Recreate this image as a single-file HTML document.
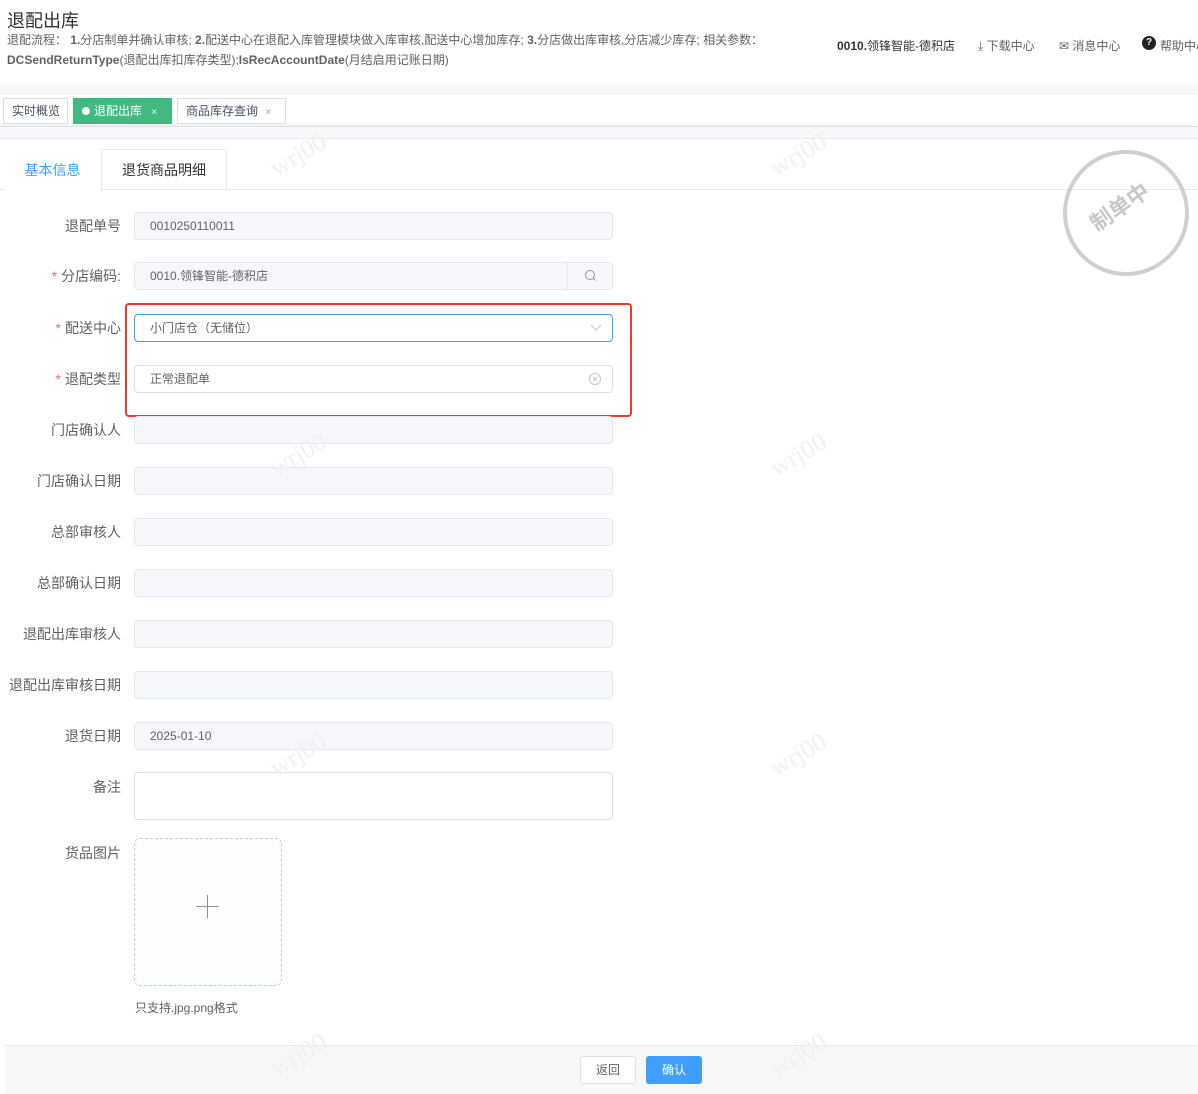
<!DOCTYPE html>
<html><head><meta charset="utf-8"><style>
*{box-sizing:border-box;margin:0;padding:0}
body{width:1198px;height:1094px;position:relative;background:#fff;font-family:"Liberation Sans","Noto Sans CJK SC",sans-serif;color:#606266;overflow:hidden}
.a{position:absolute}
.lbl{position:absolute;right:1077px;font-size:14px;color:#606266;white-space:nowrap;line-height:28px}
.req{color:#f56c6c;margin-right:4px}
.inp{position:absolute;left:134px;width:479px;height:28px;background:#f5f7fa;border:1px solid #e4e7ed;border-radius:4px;font-size:12px;color:#606266;line-height:26px;padding-left:15px}
.wm{position:absolute;font-family:"Liberation Serif",serif;font-size:26px;color:#f0f0f0;transform:rotate(-30deg);white-space:nowrap}
.tab{position:absolute;top:98px;height:26px;border:1px solid #d8dce5;font-size:12px;line-height:24px;padding:0 8px;color:#495060;background:#fff;white-space:nowrap}
</style></head><body>
<div class="a" style="left:7px;top:7px;font-size:18px;color:#303133">退配出库</div>
<div class="a" style="left:7px;top:30px;font-size:12px;color:#606266;line-height:20px;width:800px;white-space:nowrap">退配流程： <b>1.</b>分店制单并确认审核; <b>2.</b>配送中心在退配入库管理模块做入库审核,配送中心增加库存; <b>3.</b>分店做出库审核,分店减少库存; 相关参数：<br><b>DCSendReturnType</b>(退配出库扣库存类型);<b>IsRecAccountDate</b>(月结启用记账日期)</div>
<div class="a" style="left:837px;top:37px;font-size:12px;color:#303133;font-weight:bold">0010.<span style="font-weight:normal">领锋智能-德积店</span></div>
<div class="a" style="left:978px;top:37px;font-size:12px;color:#606266">⤓ 下载中心</div>
<div class="a" style="left:1059px;top:37px;font-size:12px;color:#606266">✉ 消息中心</div>
<div class="a" style="left:1142px;top:36px;width:14px;height:14px;border-radius:50%;background:#222;color:#fff;font-size:10px;text-align:center;line-height:14px;font-weight:bold">?</div>
<div class="a" style="left:1160px;top:37px;font-size:12px;color:#606266;white-space:nowrap">帮助中心</div>
<div class="a" style="left:0;top:84px;width:1198px;height:10px;background:#f7f8fa;border-bottom:1px solid #eef0f3"></div>
<div class="a" style="left:0;top:126px;width:1198px;height:12px;background:#f7f8fa;border-top:1px solid #dcdfe6;box-shadow:0 -1px 3px rgba(0,0,0,.08)"></div>
<div class="a" style="left:0;top:138px;width:1198px;height:1px;background:#e8eaee"></div>
<div class="tab" style="left:3px;width:65px">实时概览</div>
<div class="tab" style="left:73px;width:99px;background:#42b983;border-color:#42b983;color:#fff"><span style="display:inline-block;width:8px;height:8px;border-radius:50%;background:#fff;margin-right:4px"></span>退配出库 <span style="font-size:10px;margin-left:6px">×</span></div>
<div class="tab" style="left:177px;width:109px">商品库存查询 <span style="font-size:10px;margin-left:4px;color:#999">×</span></div>
<div class="a" style="left:0;top:189px;width:1198px;height:1px;background:#e4e7ed"></div>
<div class="a" style="left:4px;top:149px;width:223px;height:41px;border:1px solid #e4e7ed;border-bottom:none;border-radius:4px 4px 0 0"></div>
<div class="a" style="left:4px;top:149px;width:98px;height:42px;background:#fff;border-right:1px solid #e4e7ed;font-size:14px;color:#409eff;text-align:center;line-height:42px">基本信息</div>
<div class="a" style="left:102px;top:149px;width:124px;height:40px;font-size:14px;color:#303133;text-align:center;line-height:42px">退货商品明细</div>

<div class="lbl" style="top:212px">退配单号</div><div class="inp" style="top:212px">0010250110011</div>
<div class="lbl" style="top:262px"><span class="req">*</span>分店编码:</div><div class="inp" style="top:262px">0010.领锋智能-德积店</div>
<div class="a" style="left:567px;top:263px;width:45px;height:26px;border-left:1px solid #e4e7ed"><svg width="45" height="26"><circle cx="22" cy="12" r="4.5" fill="none" stroke="#909399" stroke-width="1"/><line x1="25.5" y1="15.5" x2="27.5" y2="17.5" stroke="#909399"/></svg></div>
<div class="lbl" style="top:314px"><span class="req">*</span>配送中心</div><div class="inp" style="top:314px;background:#fff;border-color:#409eff">小门店仓（无储位）<svg style="position:absolute;right:10px;top:9px" width="12" height="8"><path d="M1 1 L6 6 L11 1" fill="none" stroke="#c0c4cc" stroke-width="1"/></svg></div>
<div class="lbl" style="top:365px"><span class="req">*</span>退配类型</div><div class="inp" style="top:365px;background:#fff;border-color:#dcdfe6">正常退配单<svg style="position:absolute;right:10px;top:6px" width="14" height="14"><circle cx="7" cy="7" r="5.5" fill="none" stroke="#c0c4cc"/><path d="M5 5 L9 9 M9 5 L5 9" stroke="#c0c4cc"/></svg></div>
<div class="a" style="left:125px;top:303px;width:507px;height:114px;border:2px solid #f03a2e;border-radius:4px"></div>
<div class="lbl" style="top:416px">门店确认人</div><div class="inp" style="top:416px"></div>
<div class="lbl" style="top:467px">门店确认日期</div><div class="inp" style="top:467px"></div>
<div class="lbl" style="top:518px">总部审核人</div><div class="inp" style="top:518px"></div>
<div class="lbl" style="top:569px">总部确认日期</div><div class="inp" style="top:569px"></div>
<div class="lbl" style="top:620px">退配出库审核人</div><div class="inp" style="top:620px"></div>
<div class="lbl" style="top:671px">退配出库审核日期</div><div class="inp" style="top:671px"></div>
<div class="lbl" style="top:722px">退货日期</div><div class="inp" style="top:722px">2025-01-10</div>
<div class="lbl" style="top:773px">备注</div><div class="inp" style="top:772px;height:48px;background:#fff;border-color:#dcdfe6"></div>
<div class="lbl" style="top:839px">货品图片</div>
<div class="a" style="left:134px;top:838px;width:148px;height:148px;border:1px dashed #c0ccda;border-radius:6px;background:#fbfdff"></div>
<div class="a" style="left:196px;top:906px;width:23px;height:1px;background:#8c939d"></div>
<div class="a" style="left:207px;top:895px;width:1px;height:23px;background:#8c939d"></div>
<div class="a" style="left:135px;top:999px;font-size:12px;color:#606266">只支持.jpg.png格式</div>

<div class="a" style="left:4px;top:1045px;width:1194px;height:49px;background:#f7f7f7;border-top:1px solid #ebebeb"></div>
<div class="a" style="left:580px;top:1056px;width:56px;height:28px;border:1px solid #dcdfe6;border-radius:3px;background:#fff;font-size:12px;color:#606266;text-align:center;line-height:26px">返回</div>
<div class="a" style="left:646px;top:1056px;width:56px;height:28px;border-radius:3px;background:#409eff;font-size:12px;color:#fff;text-align:center;line-height:28px">确认</div>

<div class="a" style="left:1063px;top:150px;width:126px;height:126px;border:4px solid #cfcfcf;border-radius:50%"></div>
<div class="a" style="left:1086px;top:190px;font-size:22px;font-weight:bold;color:#c8c8c8;transform:rotate(-35deg)">制单中</div>

<div class="wm" style="left:268px;top:140px">wrj00</div><div class="wm" style="left:768px;top:140px">wrj00</div>
<div class="wm" style="left:268px;top:440px">wrj00</div><div class="wm" style="left:768px;top:440px">wrj00</div>
<div class="wm" style="left:268px;top:740px">wrj00</div><div class="wm" style="left:768px;top:740px">wrj00</div>
<div class="wm" style="left:268px;top:1040px">wrj00</div><div class="wm" style="left:768px;top:1040px">wrj00</div>
</body></html>
